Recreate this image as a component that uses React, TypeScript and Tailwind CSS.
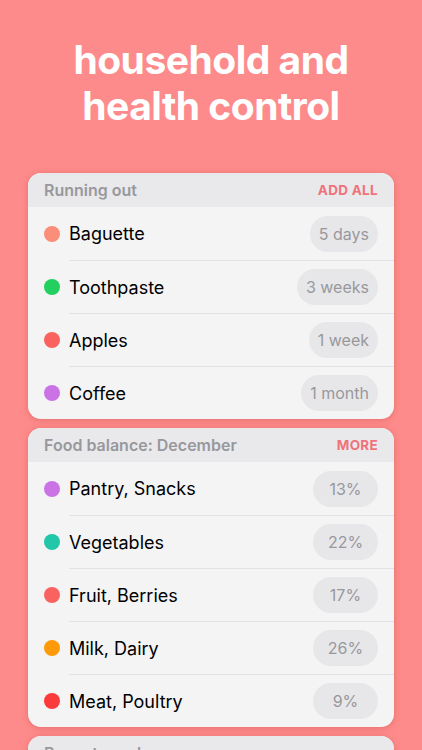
const running = [
  { name: 'Baguette', dot: 'bg-[#FA8E78]', value: '5 days' },
  { name: 'Toothpaste', dot: 'bg-[#22CF5F]', value: '3 weeks' },
  { name: 'Apples', dot: 'bg-[#F9625F]', value: '1 week' },
  { name: 'Coffee', dot: 'bg-[#CB72E5]', value: '1 month' },
]

const balance = [
  { name: 'Pantry, Snacks', dot: 'bg-[#CB72E5]', value: '13%' },
  { name: 'Vegetables', dot: 'bg-[#22C7A9]', value: '22%' },
  { name: 'Fruit, Berries', dot: 'bg-[#F9625F]', value: '17%' },
  { name: 'Milk, Dairy', dot: 'bg-[#FD9A0B]', value: '26%' },
  { name: 'Meat, Poultry', dot: 'bg-[#FB3B3B]', value: '9%' },
]

type Row = { name: string; dot: string; value: string }

function Card({
  title,
  action,
  rows,
  fixedPill,
}: {
  title: string
  action?: string
  rows: Row[]
  fixedPill?: boolean
}) {
  return (
    <div className="overflow-hidden rounded-[13px] bg-[#F4F4F5] shadow-[0_1px_6px_rgba(180,60,60,0.35)]">
      <div className="flex h-[34px] items-center justify-between bg-[#E9E9EC] px-4">
        <span className="text-[16px] font-semibold text-[#98989C]">{title}</span>
        {action && <span className="text-[13.5px] font-bold tracking-[0.3px] text-[#F0727A]">{action}</span>}
      </div>
      <div>
        {rows.map((row, i) => (
          <div key={row.name} className="flex h-[53px] items-center pl-4">
            <span className={`h-4 w-4 shrink-0 rounded-full ${row.dot}`} />
            <div
              className={`ml-[9px] flex h-full flex-1 items-center justify-between pr-4 ${
                i > 0 ? 'border-t border-[#E2E2E4]' : ''
              }`}
            >
              <span className="text-[18px] text-black">{row.name}</span>
              <span
                className={`flex h-[36px] items-center justify-center rounded-full bg-[#E7E7EA] text-[16px] text-[#98989C] ${
                  fixedPill ? 'w-[65px]' : 'px-[9px]'
                }`}
              >
                {row.value}
              </span>
            </div>
          </div>
        ))}
      </div>
    </div>
  )
}

export default function App() {
  return (
    <div className="h-[750px] w-[422px] overflow-hidden bg-[#FE8B8B] font-['Inter',sans-serif]">
      <h1 className="pt-[37px] text-center text-[39px] leading-[46px] font-bold tracking-[-0.5px] text-white">
        household and
        <br />
        health control
      </h1>
      <div className="mt-[44px] flex flex-col gap-[9px] px-[28px]">
        <Card title="Running out" action="ADD ALL" rows={running} />
        <Card title="Food balance: December" action="MORE" rows={balance} fixedPill />
        <Card title="Recent purchases" rows={[]} />
      </div>
    </div>
  )
}
